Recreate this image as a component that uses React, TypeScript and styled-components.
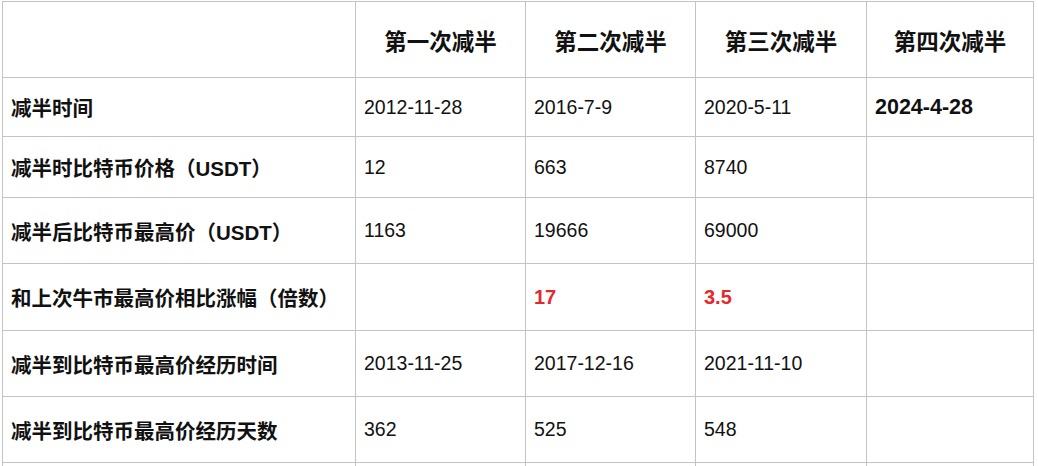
import styled, { createGlobalStyle } from 'styled-components';

const GlobalStyle = createGlobalStyle`
  body {
    margin: 0;
    background: #ffffff;
    font-family: "Liberation Sans", "Noto Sans CJK SC", sans-serif;
    color: #111111;
  }
`;

const columns = [353, 170, 170, 171, 167];
const headers = ['第一次减半', '第二次减半', '第三次减半', '第四次减半'];

type Cell = { text: string; tone?: 'red' | 'bold' };

const rows: { label: string; height: number; cells: Cell[] }[] = [
  {
    label: '减半时间',
    height: 59,
    cells: [{ text: '2012-11-28' }, { text: '2016-7-9' }, { text: '2020-5-11' }, { text: '2024-4-28', tone: 'bold' }],
  },
  {
    label: '减半时比特币价格（USDT）',
    height: 61,
    cells: [{ text: '12' }, { text: '663' }, { text: '8740' }, { text: '' }],
  },
  {
    label: '减半后比特币最高价（USDT）',
    height: 66,
    cells: [{ text: '1163' }, { text: '19666' }, { text: '69000' }, { text: '' }],
  },
  {
    label: '和上次牛市最高价相比涨幅（倍数）',
    height: 67,
    cells: [{ text: '' }, { text: '17', tone: 'red' }, { text: '3.5', tone: 'red' }, { text: '' }],
  },
  {
    label: '减半到比特币最高价经历时间',
    height: 66,
    cells: [{ text: '2013-11-25' }, { text: '2017-12-16' }, { text: '2021-11-10' }, { text: '' }],
  },
  {
    label: '减半到比特币最高价经历天数',
    height: 66,
    cells: [{ text: '362' }, { text: '525' }, { text: '548' }, { text: '' }],
  },
];

export default function App() {
  return (
    <>
      <GlobalStyle />
      <StyledPage>
        <StyledTable>
          <colgroup>
            {columns.map((w, i) => (
              <col key={i} style={{ width: w }} />
            ))}
          </colgroup>
          <thead>
            <tr>
              <StyledCorner $height={76} />
              {headers.map((h) => (
                <StyledHead key={h}>{h}</StyledHead>
              ))}
            </tr>
          </thead>
          <tbody>
            {rows.map((row) => (
              <tr key={row.label}>
                <StyledLabel $height={row.height}>{row.label}</StyledLabel>
                {row.cells.map((cell, i) => (
                  <StyledValue key={i} $tone={cell.tone}>
                    {cell.text}
                  </StyledValue>
                ))}
              </tr>
            ))}
            <tr>
              <StyledLabel $height={20} />
              {headers.map((h) => (
                <StyledValue key={h} />
              ))}
            </tr>
          </tbody>
        </StyledTable>
      </StyledPage>
    </>
  );
}

const StyledPage = styled.div`
  padding: 1px 0 0 2px;
  height: 466px;
  overflow: hidden;
`;

const StyledTable = styled.table`
  border-collapse: collapse;
  table-layout: fixed;
  width: 1031px;

  td,
  th {
    border: 1px solid #c4c4c4;
    padding: 0 8px;
    box-sizing: border-box;
  }
`;

const StyledCorner = styled.th<{ $height: number }>`
  height: ${(p) => p.$height}px;
`;

const StyledHead = styled.th`
  font-size: 22.5px;
  font-weight: 700;
  text-align: center;
  vertical-align: middle;
`;

const StyledLabel = styled.td<{ $height: number }>`
  height: ${(p) => p.$height}px;
  font-size: 20.5px;
  font-weight: 700;
  text-align: left;
  vertical-align: middle;
  white-space: nowrap;
`;

const StyledValue = styled.td<{ $tone?: 'red' | 'bold' }>`
  font-size: ${(p) => (p.$tone === 'bold' ? '21.5px' : p.$tone ? '20px' : '19.5px')};
  font-weight: ${(p) => (p.$tone ? 700 : 400)};
  color: ${(p) => (p.$tone === 'red' ? '#e5292a' : '#111111')};
  padding-top: ${(p) => (p.$tone === 'bold' ? '6px' : '0')};
  text-align: left;
  vertical-align: middle;
`;
